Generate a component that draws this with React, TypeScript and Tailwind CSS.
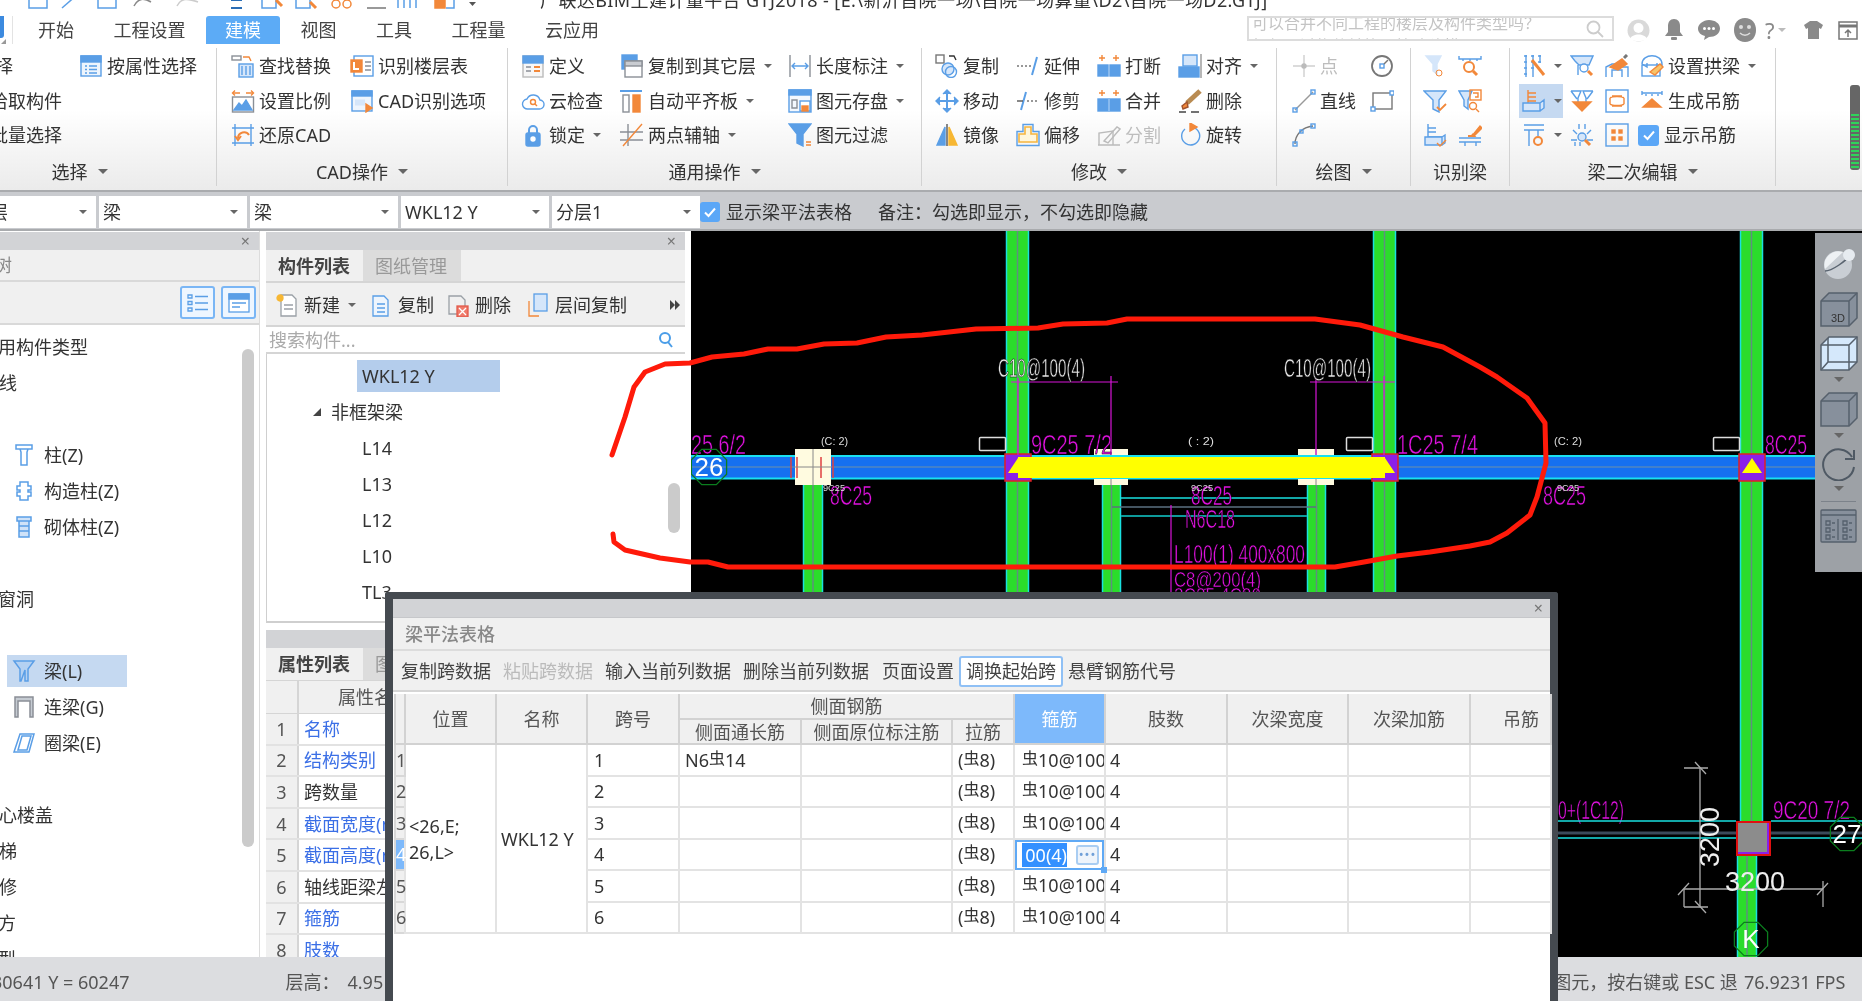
import * as React from "react";

const B = "#5a9ee6";
const O = "#f2883a";
const L = "#d5e6fa";
const D = "#8a8f96";

// ribbon glyphs, all drawn on a 24 box
const ICONS: Record<string, React.ReactNode> = {
  attr: <><rect x="2" y="2" width="20" height="20" fill="#eef5fd" /><rect x="2" y="2" width="20" height="6" fill={B} /><path d="M6 12h2M10 12h8M6 15.5h2M10 15.5h8M6 19h2M10 19h8" /></>,
  find: <><rect x="1" y="2" width="9" height="4" stroke={D} /><path d="M12 3h6l2 4" stroke={O} /><rect x="8" y="10" width="14" height="13" fill={L} /><path d="M11 12v9M15 12v9M19 12v9" /></>,
  scale: <><path d="M2 4h7M15 4h7" stroke={O} /><path d="M4 1.500 1.500 4 4 6.500M20 1.500 22.500 4 20 6.500" stroke={O} /><rect x="1.500" y="8" width="21" height="15" stroke={D} /><path d="M3 21l5-7 3 3 4-6 6 10z" fill={B} /></>,
  undo: <><path d="M1 5h22M1 20h22M4 1v22M20 1v22" /><path d="M7 15a6 6 0 0 1 11-3" stroke={O} strokeWidth="2" /><path d="M10 13 7 17 4 13" stroke={O} strokeWidth="2" /></>,
  floor: <><rect x="4" y="2" width="19" height="20" /><rect x="1" y="6" width="11" height="12" fill={O} stroke={O} /><path d="M4 8v7h5" stroke="#fff" strokeWidth="2" /><path d="M15 8h6M15 12h6M15 16h6" stroke={D} /></>,
  cadopt: <><rect x="2" y="2" width="20" height="20" fill="#eef5fd" /><rect x="2" y="2" width="20" height="5" fill={B} /><path d="M5 15h10M5 12h10" stroke={L} strokeWidth="3" /><path d="M16 15l6 4-6 4z" fill={O} stroke={O} /></>,
  define: <><rect x="2" y="2" width="20" height="21" fill="#f7f7f7" stroke="#bbb" /><rect x="2" y="2" width="20" height="7" fill={B} /><path d="M5 13h5M5 17h5" stroke={D} /><path d="M13 13h6M13 17h6" stroke={O} strokeWidth="2" /></>,
  cloud: <><path d="M7 20a5 5 0 0 1-1-10 7 7 0 0 1 13 1 4.500 4.500 0 0 1-1 9z" /><circle cx="12" cy="13" r="2.500" stroke={O} /><path d="M14 15l2 2" stroke={O} /></>,
  lock: <><path d="M8 11V7a4 4 0 0 1 8 0v4" strokeWidth="2" /><rect x="5" y="10" width="14" height="13" rx="2" fill={B} /><circle cx="12" cy="16" r="2" fill="#fff" stroke="#fff" /></>,
  copyto: <><rect x="2" y="1" width="15" height="14" fill={B} /><rect x="5" y="7" width="17" height="16" fill="#fff" stroke={D} /><rect x="5" y="7" width="17" height="5" fill="#c9ccd1" stroke={D} /></>,
  level: <><path d="M0 2h22" strokeWidth="2" /><rect x="3" y="6" width="6" height="17" stroke={D} /><rect x="13" y="6" width="7" height="17" fill={O} stroke={O} /></>,
  axis: <><path d="M0 9h23M0 17h23" stroke={D} /><path d="M8 1v22" stroke={D} /><path d="M22 1 3 23" stroke={O} /></>,
  dim: <><path d="M2 1v22M22 1v22" stroke={D} /><path d="M4 12h16M7 9l-3 3 3 3M17 9l3 3-3 3" /></>,
  store: <><rect x="1" y="1" width="22" height="22" fill="#f3f8fe" /><rect x="1" y="1" width="22" height="5" fill={B} /><path d="M4 11h5v8H4z" stroke={D} /><rect x="12" y="12" width="10" height="10" stroke={B} fill="#fff" /><rect x="14" y="17" width="6" height="5" fill={O} stroke={O} /></>,
  filter: <><path d="M1 1h22l-8 10v12l-6-3v-9z" fill={B} /><path d="M18 19h5M18 22h5" stroke={O} /></>,
  copy: <><rect x="1" y="1" width="8" height="8" stroke="#777" /><path d="M14 2h5l2 4" stroke="#333" /><circle cx="13" cy="15" r="6" fill={L} /><circle cx="16" cy="18" r="5.500" /></>,
  move: <><path d="M12 3v18M3 12h18" strokeWidth="2" /><path d="M8 5l4-4 4 4M8 19l4 4 4-4M5 8l-4 4 4 4M19 8l4 4-4 4" fill={B} /></>,
  mirror: <><path d="M10 4v18H2z" fill={B} stroke={B} /><path d="M14 4v18h8z" fill="#f7b733" stroke="#f7b733" /><path d="M12 1v22" stroke="#555" /></>,
  extend: <><path d="M1 12h2M5 12h2M9 12h2M13 12h2" stroke="#777" /><path d="M21 3 16 21" strokeWidth="2" /></>,
  trim: <><path d="M10 3 5 21" strokeWidth="2" /><path d="M1 12h6" stroke="#555" /><path d="M11 12h2M15 12h2M19 12h2" stroke="#777" /></>,
  offset: <><path d="M9 4h6v7h6v8H3v-8h6z" fill="#fff6dc" stroke="#f5b53f" strokeWidth="1.600" /><path d="M7 1.500h10v7h6v14H1v-14h6z" /></>,
  brk: <><path d="M5 1v6M2 4h6M19 1v6M16 4h6" stroke={O} /><rect x="1" y="11" width="10" height="11" fill={B} stroke={B} /><rect x="13" y="11" width="10" height="11" fill={B} stroke={B} /></>,
  merge: <><path d="M5 1v6M2 4h6M19 1v6M16 4h6" stroke={O} /><rect x="1" y="10" width="22" height="12" fill={B} stroke={B} /><path d="M12 10v12" stroke="#9cc6f2" /></>,
  split: <><path d="M2 22V10l14-2v14zM1 22h22" stroke="#bbb" /><path d="M7 18 20 4l3 2-12 14z" stroke="#bbb" /></>,
  align: <><rect x="5" y="1" width="14" height="11" fill={L} /><rect x="1" y="13" width="20" height="10" fill={B} stroke={B} /><path d="M23 0v24" stroke="#999" /></>,
  brush: <><path d="M22 2 9 14" stroke="#b98b52" strokeWidth="5" /><path d="M9 13l-5 4 1 3 5-2z" fill={O} stroke="#a0522d" /><path d="M1 23h7M13 23h8" stroke="#444" /></>,
  rotate: <><path d="M13 4a9 9 0 1 1-6 2" /><path d="M12 0l7 4-7 4z" fill={O} stroke={O} /></>,
  point: <><path d="M1 12h22M12 1v22" stroke="#cfcfcf" /><circle cx="12" cy="12" r="2" fill="#bbb" stroke="#bbb" /></>,
  circle: <><circle cx="12" cy="12" r="10" stroke="#777" strokeWidth="1.800" /><rect x="10" y="10" width="4" height="4" /><path d="M14 10l4-4" stroke="#777" /></>,
  line: <><path d="M3 21 21 3" stroke="#999" /><rect x="1" y="19" width="4" height="4" /><rect x="19" y="1" width="4" height="4" /></>,
  rect: <><rect x="3" y="4" width="19" height="16" stroke="#777" /><rect x="1" y="18" width="4" height="4" fill="#fff" /><rect x="20" y="2" width="4" height="4" fill="#fff" /></>,
  arc: <><path d="M3 21C3 12 10 4 21 3" stroke="#777" /><rect x="1" y="19" width="4" height="4" /><rect x="19" y="1" width="4" height="4" /><rect x="8" y="7" width="3" height="3" /></>,
  f1: <><path d="M3 2h15l-4 8v10l-4-3v-7z" fill={L} stroke={L} /><circle cx="16" cy="19" r="3" stroke={O} strokeWidth="1" /></>,
  f2: <><path d="M1 2v3h22V2M5 5v2M12 5v2M19 5v2" /><circle cx="11" cy="13" r="5" stroke={O} strokeWidth="2" /><path d="M15 17l4 4" stroke={O} strokeWidth="3" /></>,
  f3: <><path d="M1 2h22l-7 9v12l-6-3v-9z" fill={L} /><path d="M14 18l3 3 6-6" stroke={O} strokeWidth="1.800" /></>,
  f4: <><path d="M1 2h13l-4 9v9l-4-3v-6z" fill={L} /><rect x="12" y="1" width="11" height="10" stroke={O} /><path d="M15 4h5v4h-3" stroke={O} /><circle cx="15" cy="17" r="3.500" stroke={O} /><path d="M18 20l3 3" stroke={O} /></>,
  f5: <><path d="M5 1v13h14M5 5h8M5 9h8" stroke={B} /><path d="M2 14h17v8H2zM19 14l3-2v8l-3 2" fill={L} /><path d="M14 20l3 3 6-6" stroke={O} /></>,
  f6: <><path d="M14 13 22 3l2 2-8 8z" fill={O} stroke={O} /><path d="M10 13h6l-2-2" stroke={O} strokeWidth="2" /><path d="M1 15h22M1 19h22M7 19v4M18 19v4" /></>,
  g1: <><path d="M2 2h3M9 2h3M16 2h3M2 8h3M9 8h3M2 14h3M9 14h3M2 20h3M16 8h3M4 1v22M18 1v8M11 1v22" /><path d="M10 6l12 15" stroke={O} strokeWidth="3" /></>,
  g2: <><path d="M1 2h22l-4 9h-10l-4-4z" fill={L} /><path d="M8 11v10" /><circle cx="14" cy="14" r="4" fill="#fff" /><path d="M18 17l4 4" stroke={O} strokeWidth="3" /></>,
  g3: <><path d="M1 23V13l6-3 5 0 6 3 5 0v10" /><path d="M7 23V16h10v7" /><path d="M5 13 17 5l5 5-9 6z" fill={O} stroke={O} /><path d="M19 4l3-3" stroke="#777" strokeWidth="3" /></>,
  g4: <><path d="M2 10c0-11 20-11 20 0v2" /><path d="M2 10l5 3V9M22 10l-5 3V9" /><rect x="2" y="11" width="18" height="11" /><path d="M10 18l10-8 3 3-8 8z" fill="#f7c46a" stroke={O} /></>,
  g5: <><path d="M6 1v14M6 4h8M6 8h8M6 12h8" stroke={O} /><path d="M1 14h17v8H1zM18 14l4-3v8l-4 3" fill={L} /></>,
  g6: <><path d="M1 2h10l-3 7v4M23 2H13l3 7v4M1 2l6 8M23 2l-6 8" /><path d="M3 13h18l-9 9z" fill={O} stroke={O} /></>,
  g7: <><rect x="1" y="1" width="22" height="22" /><path d="M7 7h10M7 17h10M5 9v6M19 9v6M5 9c2-2 12-2 14 0M5 15c2 2 12 2 14 0" stroke={O} /></>,
  g8: <><path d="M2 2v4M22 2v4M2 4h20M6 5v2M12 5v2M18 5v2" /><path d="M12 10l9 8H3z" fill={O} stroke={O} /></>,
  g9: <><path d="M2 2h20M2 7h20M7 7v16M16 7v6" /><circle cx="16" cy="18" r="4" stroke={O} strokeWidth="2" /></>,
  g10: <><path d="M9 1v5M15 1v5M3 7l4 4M21 7l-4 4M1 17h6M17 17h6" /><circle cx="12" cy="14" r="4" fill={L} /><path d="M15 17l5 5" stroke={O} strokeWidth="3" /><path d="M5 23v-4M10 23v-4" /></>,
  g11: <><rect x="1" y="1" width="22" height="22" /><rect x="7" y="7" width="3" height="3" fill={O} stroke={O} /><rect x="14" y="7" width="3" height="3" fill={O} stroke={O} /><rect x="7" y="14" width="3" height="3" fill={O} stroke={O} /><rect x="14" y="14" width="3" height="3" fill={O} stroke={O} /></>,
};

const Ic = ({ name, size = 24 }: { name: string; size?: number }) => (
  <svg width={size} height={size} viewBox="0 0 24 24" fill="none" stroke={B} strokeWidth="1.400" className="shrink-0">
    {ICONS[name]}
  </svg>
);

const Caret = ({ big, className = "" }: { big?: boolean; className?: string }) => (
  <span
    className={
      (big
        ? "border-x-[5px] border-t-[5px] "
        : "border-x-[4px] border-t-[4px] ") +
      "inline-block w-0 h-0 border-x-transparent border-t-[#666] " +
      className
    }
  />
);

interface ItemProps {
  icon?: string;
  label?: string;
  caret?: boolean;
  gray?: boolean;
  className?: string;
}

const Item = ({ icon, label, caret, gray, className = "" }: ItemProps) => (
  <div className={"flex items-center h-[34.5px] whitespace-nowrap " + (gray ? "text-[#bdbdbd] " : "") + className}>
    {icon && <Ic name={icon} />}
    {label && <span className={icon ? "ml-[4px]" : ""}>{label}</span>}
    {caret && <Caret className="ml-[8px]" />}
  </div>
);

const Check = ({ className = "" }: { className?: string }) => (
  <span className={"flex items-center justify-center w-[20px] h-[20px] rounded-[3px] bg-[#5ba7f7] shrink-0 " + className}>
    <svg width="14" height="14" viewBox="0 0 14 14" fill="none" stroke="#fff" strokeWidth="2">
      <path d="M2 7.500 5.500 11 12 3.500" />
    </svg>
  </span>
);

const Group = ({ w, label, labelClass = "", children }: { w: string; label: string; labelClass?: string; children: React.ReactNode }) => (
  <div className={"flex flex-col my-[4px] border-r border-[#d2d2d2] shrink-0 " + w}>
    <div className="flex pt-[1px]">{children}</div>
    <div className={"flex-1 flex items-center justify-center gap-[10px] pt-[5px] " + labelClass}>
      <span>{label}</span>
      {label !== "识别梁" && <Caret big />}
    </div>
  </div>
);

const Ribbon = () => (
  <div className="flex h-[146px] bg-linear-to-b from-white from-45% to-[#ebebeb] text-[18px] text-[#333] leading-none">
    <Group w="w-[217px]" label="选择" labelClass="pr-[57px]">
      <div className="w-[79px]">
        <Item label="选择" className="ml-[-23px]" />
        <Item label="拾取构件" className="ml-[-10px]" />
        <Item label="批量选择" className="ml-[-10px]" />
      </div>
      <Item icon="attr" label="按属性选择" />
    </Group>
    <Group w="w-[291px]" label="CAD操作">
      <div className="w-[119px] ml-[14px]">
        <Item icon="find" label="查找替换" />
        <Item icon="scale" label="设置比例" />
        <Item icon="undo" label="还原CAD" />
      </div>
      <div>
        <Item icon="floor" label="识别楼层表" />
        <Item icon="cadopt" label="CAD识别选项" />
      </div>
    </Group>
    <Group w="w-[414px]" label="通用操作">
      <div className="w-[99px] ml-[13px]">
        <Item icon="define" label="定义" />
        <Item icon="cloud" label="云检查" />
        <Item icon="lock" label="锁定" caret />
      </div>
      <div className="w-[168px]">
        <Item icon="copyto" label="复制到其它层" caret />
        <Item icon="level" label="自动平齐板" caret />
        <Item icon="axis" label="两点辅轴" caret />
      </div>
      <div>
        <Item icon="dim" label="长度标注" caret />
        <Item icon="store" label="图元存盘" caret />
        <Item icon="filter" label="图元过滤" />
      </div>
    </Group>
    <Group w="w-[355px]" label="修改">
      <div className="w-[81px] ml-[13px]">
        <Item icon="copy" label="复制" />
        <Item icon="move" label="移动" />
        <Item icon="mirror" label="镜像" />
      </div>
      <div className="w-[81px]">
        <Item icon="extend" label="延伸" />
        <Item icon="trim" label="修剪" />
        <Item icon="offset" label="偏移" />
      </div>
      <div className="w-[81px]">
        <Item icon="brk" label="打断" />
        <Item icon="merge" label="合并" />
        <Item icon="split" label="分割" gray />
      </div>
      <div>
        <Item icon="align" label="对齐" caret />
        <Item icon="brush" label="删除" />
        <Item icon="rotate" label="旋转" />
      </div>
    </Group>
    <Group w="w-[134px]" label="绘图">
      <div className="w-[78px] ml-[15px]">
        <Item icon="point" label="点" gray />
        <Item icon="line" label="直线" />
        <Item icon="arc" />
      </div>
      <div>
        <Item icon="circle" />
        <Item icon="rect" />
      </div>
    </Group>
    <Group w="w-[99px]" label="识别梁">
      <div className="w-[35px] ml-[12px]">
        <Item icon="f1" />
        <Item icon="f3" />
        <Item icon="f5" />
      </div>
      <div>
        <Item icon="f2" />
        <Item icon="f4" />
        <Item icon="f6" />
      </div>
    </Group>
    <Group w="w-[266px]" label="梁二次编辑">
      <div className="w-[51px] ml-[9px]">
        <Item icon="g1" caret className="pl-[3px]" />
        <Item icon="g5" caret className="pl-[3px] w-[44px] bg-[#c5d9f1]" />
        <Item icon="g9" caret className="pl-[3px]" />
      </div>
      <div className="w-[35px]">
        <Item icon="g2" />
        <Item icon="g6" />
        <Item icon="g10" />
      </div>
      <div className="w-[33px]">
        <Item icon="g3" />
        <Item icon="g7" />
        <Item icon="g11" />
      </div>
      <div>
        <Item icon="g4" label="设置拱梁" caret className="pl-[2px]" />
        <Item icon="g8" label="生成吊筋" className="pl-[2px]" />
        <div className="flex items-center h-[34.5px] whitespace-nowrap">
          <Check className="w-[21px] h-[21px]" />
          <span className="ml-[5px]">显示吊筋</span>
        </div>
      </div>
    </Group>
    {/* little memory gauge at the far right */}
    <div className="ml-[74px] mt-[41px] w-[10px] h-[85px] rounded-[3px] bg-[#666] flex flex-col justify-end gap-[2px] pb-[2px] px-[1px]">
      {[...Array(14)].map((_, i) => (
        <div key={i} className="h-[2px] bg-[#2fd35a]" />
      ))}
    </div>
  </div>
);

const QuickBar = () => (
  <svg width="480" height="16" viewBox="0 0 480 16" fill="none" stroke={B} strokeWidth="1.500" className="shrink-0">
    <rect x="29" y="-8" width="18" height="16" />
    <path d="M62 8 78-6" />
    <rect x="98" y="-8" width="18" height="16" />
    <path d="M134 6c4-8 10-8 17-4" stroke="#888" />
    <path d="M177 6c4-8 10-8 21-4" stroke="#ccc" />
    <path d="M231 8h11M231 0h11" stroke="#2a6db5" strokeWidth="2" />
    <rect x="262" y="-6" width="14" height="14" />
    <path d="M276 0l6 6" stroke={O} strokeWidth="3" />
    <rect x="296" y="-6" width="14" height="14" />
    <path d="M310 2l6 6" stroke={O} strokeWidth="3" />
    <circle cx="336" cy="4" r="4" stroke={O} />
    <circle cx="347" cy="4" r="4" stroke={O} />
    <path d="M367 8h19" stroke="#777" />
    <path d="M398 8V-4h18v12M404 8V-4M410 8V-4" />
    <rect x="435" y="-4" width="10" height="12" fill={O} stroke={O} />
    <path d="M446-4h8v12h-8" />
    <path d="M469 2h7l-3.500 4z" fill="#555" stroke="none" />
  </svg>
);

const TabBar = () => (
  <div className="flex h-[28px] text-[18px] text-[#444] leading-none">
    <div className="w-[13px] border-r border-[#e3e3e3] shrink-0">
      <div className="w-[4px] h-[22px] bg-[#3c8adf] rounded-br-[3px]" />
      <div className="mt-[1px] ml-[1px] w-0 h-0 border-l-[5px] border-l-transparent border-b-[5px] border-b-[#999]" />
    </div>
    <div className="flex ml-[6px] gap-[1.500px] shrink-0 whitespace-nowrap">
      {["开始", "工程设置", "建模", "视图", "工具", "工程量", "云应用"].map((t) => (
        <div
          key={t}
          className={
            t === "建模"
              ? "flex items-center px-[19px] rounded-t-[3px] bg-[#5cabf6] text-white"
              : "flex items-center px-[19px]"
          }
        >
          {t}
        </div>
      ))}
    </div>
    <div className="ml-[629px] w-[367px] h-[25px] border-2 border-[#dcdcdc] overflow-hidden relative text-[16px] text-[#c4c4c4] shrink-0">
      <div className="pl-[3px] mt-[-3px] whitespace-nowrap h-[23px]">可以合并不同工程的楼层及构件类型吗？</div>
      <div className="pl-[3px] whitespace-nowrap">如何通过构件转换，快速建模？</div>
      <svg width="18" height="18" viewBox="0 0 18 18" fill="none" stroke="#ccc" strokeWidth="1.800" className="absolute right-[8px] top-[2px]">
        <circle cx="7.500" cy="7.500" r="6" />
        <path d="M12 12l5 5" />
      </svg>
    </div>
    <div className="flex items-center gap-[14px] ml-[13px] text-[#8a8a8a] shrink-0">
      <svg width="23" height="23" viewBox="0 0 23 23" className="shrink-0">
        <circle cx="11.500" cy="11.500" r="11" fill="#d9d9d9" />
        <circle cx="11.500" cy="9" r="5" fill="#fff" />
        <path d="M3 20c2-6 15-6 17 0-4 3-13 3-17 0z" fill="#fff" />
      </svg>
      <svg width="20" height="22" viewBox="0 0 20 22" fill="#8a8a8a" className="shrink-0">
        <path d="M10 0c4 0 6 3 6 7v6l3 4H1l3-4V7c0-4 2-7 6-7z" />
        <rect x="7" y="18" width="6" height="3" rx="1" />
      </svg>
      <svg width="22" height="20" viewBox="0 0 22 20" className="shrink-0">
        <path d="M11 0c6 0 11 3.500 11 8.500S17 17 11 17l-5 3 1-4C3 15 0 12.500 0 8.500S5 0 11 0z" fill="#8a8a8a" />
        <circle cx="6.500" cy="8.500" r="1.500" fill="#fff" />
        <circle cx="11" cy="8.500" r="1.500" fill="#fff" />
        <circle cx="15.500" cy="8.500" r="1.500" fill="#fff" />
      </svg>
      <svg width="22" height="24" viewBox="0 0 22 24" className="shrink-0">
        <path d="M11 0c7 0 11 5 11 12s-4 12-11 12S0 19 0 12 4 0 11 0z" fill="#8a8a8a" />
        <circle cx="7" cy="9" r="2" fill="#ddd" />
        <circle cx="15" cy="9" r="2" fill="#ddd" />
        <path d="M6 15c3 3 7 3 10 0" stroke="#ddd" strokeWidth="1.500" fill="none" />
      </svg>
      <div className="flex items-center gap-[3px] text-[22px] ml-[-5px]">
        ?<Caret className="border-t-[#bbb]" />
      </div>
      <svg width="19" height="18" viewBox="0 0 19 18" fill="#8a8a8a" className="ml-[4px] shrink-0">
        <path d="M6 0h7l6 4-2 4-2-1v11H4V7L2 8 0 4z" />
      </svg>
      <svg width="20" height="19" viewBox="0 0 20 19" fill="none" stroke="#777" strokeWidth="1.500" className="ml-[1px] shrink-0">
        <rect x="1" y="1" width="18" height="17" />
        <path d="M1 5h18" strokeWidth="3" />
        <path d="M10 16V9M7 12l3-3 3 3" />
      </svg>
    </div>
  </div>
);

const Select = ({ text, w = "w-[148px]", textClass = "" }: { text: string; w?: string; textClass?: string }) => (
  <div className={"flex items-center justify-between h-[32px] bg-white pl-[4px] pr-[9px] shrink-0 overflow-hidden " + w}>
    <span className={"whitespace-nowrap " + textClass}>{text}</span>
    <Caret />
  </div>
);

const FilterBar = () => (
  <div className="flex items-start h-[37px] pt-[4px] gap-[3px] bg-[#c9cbcf] text-[18px] text-[#333] leading-none">
    <Select text="层" w="w-[96px]" textClass="ml-[-14px]" />
    <Select text="梁" />
    <Select text="梁" />
    <Select text="WKL12 Y" />
    <Select text="分层1" />
    <Check className="ml-[-3px] mt-[6px]" />
    <span className="ml-[3px] mt-[7px]">显示梁平法表格</span>
    <span className="ml-[23px] mt-[7px]">备注：勾选即显示，不勾选即隐藏</span>
  </div>
);

const LEFT_ROWS: { text: string; cut?: string; icon?: React.ReactNode; selected?: boolean }[] = [
  { text: "常用构件类型", cut: "ml-[-20px]" },
  { text: "轴线", cut: "ml-[-19px]" },
  { text: "" },
  {
    text: "柱(Z)",
    icon: <path d="M4 2h16v4H4zM8 6l1 3v13h6V9l1-3" />,
  },
  {
    text: "构造柱(Z)",
    icon: <path d="M8 3h8v4h3v4h-3v2h3v4h-3v4H8v-4H5v-4h3v-2H5V7h3z" />,
  },
  {
    text: "砌体柱(Z)",
    icon: <path d="M5 2h14v4H5zM7 6h10v16H7zM7 11h10M7 16h10" fill="#cfe2f8" />,
  },
  { text: "" },
  { text: "门窗洞", cut: "ml-[-20px]" },
  { text: "" },
  {
    text: "梁(L)",
    selected: true,
    icon: <path d="M2 2h20l-6 8v12h-3V11L9 22H8V10z" fill="#b4d1f2" />,
  },
  {
    text: "连梁(G)",
    icon: <path d="M3 2h18v20h-3V6H6v16H3z" stroke="#8a8f96" fill="#c5cbd2" />,
  },
  {
    text: "圈梁(E)",
    icon: <path d="M8 3h14l-5 18H2zM10 5h9l-4 14H6z" />,
  },
  { text: "" },
  { text: "空心楼盖", cut: "ml-[-19px]" },
  { text: "楼梯", cut: "ml-[-19px]" },
  { text: "装修", cut: "ml-[-19px]" },
  { text: "土方", cut: "ml-[-20px]" },
  { text: "类型", cut: "ml-[-20px]" },
];

const PanelHead = ({ x = "" }: { x?: string }) => (
  <div className="flex items-center justify-end h-[18px] bg-[#d2d3d6] shrink-0">
    {x && <span className={"text-[16px] leading-none text-[#777] " + x}>×</span>}
  </div>
);

const LeftPanel = () => (
  <div className="w-[260px] h-full pt-[1px] shrink-0 flex flex-col border-r border-[#dcdcdc] overflow-hidden relative">
    <PanelHead x="mr-[9px]" />
    <div className="flex items-center h-[32px] bg-[#f0f0f0] border-b-2 border-[#d9d9d9] text-[18px] text-[#888] shrink-0">
      <span className="ml-[-42px] whitespace-nowrap">导航树</span>
    </div>
    <div className="flex justify-end items-center gap-[6px] h-[43px] pr-[3px] bg-[#f0f0f0] border-b-2 border-[#d9d9d9] shrink-0">
      <div className="flex items-center justify-center w-[35px] h-[33px] rounded-[3px] bg-[#eef6ff] border-2 border-[#7ab6f5]">
        <svg width="22" height="20" viewBox="0 0 22 20" fill="none" stroke={B} strokeWidth="1.300">
          <path d="M1 2h4v3H1zM1 8.500h4v3H1zM1 15h4v3H1zM8 3.500h13M8 10h13M8 16.500h13" />
        </svg>
      </div>
      <div className="flex items-center justify-center w-[35px] h-[33px] rounded-[3px] bg-[#eef6ff] border-2 border-[#7ab6f5]">
        <svg width="22" height="20" viewBox="0 0 22 20" fill="none" stroke={B} strokeWidth="1.300">
          <rect x="1" y="1" width="20" height="18" fill="#fff" />
          <path d="M1 1h20v5H1z" fill={B} />
          <path d="M4 10h14M4 14h8" />
        </svg>
      </div>
    </div>
    <div className="flex-1 bg-white pt-[4px] text-[18px] text-[#333] leading-none overflow-hidden">
      {LEFT_ROWS.map((r, i) => (
        <div key={i} className="flex items-center h-[36px] whitespace-nowrap">
          {r.icon ? (
            <div className={"flex items-center w-[120px] h-[32px] ml-[7px] pl-[5px] " + (r.selected ? "bg-[#c5d9f1]" : "")}>
              <svg width="24" height="24" viewBox="0 0 24 24" fill="none" stroke={B} strokeWidth="1.500" className="shrink-0">
                {r.icon}
              </svg>
              <span className="ml-[8px]">{r.text}</span>
            </div>
          ) : (
            <span className={r.cut}>{r.text}</span>
          )}
        </div>
      ))}
    </div>
    <div className="absolute left-[242px] top-[118px] w-[12px] h-[498px] rounded-full bg-[#cbcbcb]" />
  </div>
);

const TREE = ["L14", "L13", "L12", "L10", "TL3"];

const PROPS: [string, boolean][] = [
  ["名称", true],
  ["结构类别", true],
  ["跨数量", false],
  ["截面宽度(mm)", true],
  ["截面高度(mm)", true],
  ["轴线距梁左线距离", false],
  ["箍筋", true],
  ["肢数", true],
];

const ToolBtn = ({ icon, text, caret, className = "" }: { icon: React.ReactNode; text: string; caret?: boolean; className?: string }) => (
  <div className={"flex items-center shrink-0 whitespace-nowrap " + className}>
    <svg width="22" height="24" viewBox="0 0 22 24" fill="none" strokeWidth="1.300" stroke="#9aa0a6" className="shrink-0">
      {icon}
    </svg>
    <span className="ml-[6px]">{text}</span>
    {caret && <Caret className="ml-[8px]" />}
  </div>
);

const MiddlePanel = () => (
  <div className="w-[419px] ml-[6px] pt-[1px] h-full shrink-0 flex flex-col text-[18px] text-[#333] leading-none overflow-hidden">
    <PanelHead x="mr-[9px]" />
    <div className="flex h-[33px] bg-[#f0f0f0] border-b-2 border-[#d5d5d5] shrink-0">
      <div className="flex items-center w-[97px] pl-[12px] font-bold text-[#444]">构件列表</div>
      <div className="flex items-center w-[98px] pl-[12px] bg-[#dcdcdc] text-[#999]">图纸管理</div>
    </div>
    <div className="flex items-center h-[44px] pl-[10px] pt-[2px] bg-[#f0f0f0] border-b-2 border-[#d5d5d5] shrink-0">
      <ToolBtn
        text="新建"
        caret
        icon={<><path d="M5 2h11l4 4v17H5z" fill="#fff" /><circle cx="4" cy="5" r="3" fill="#f7b733" stroke="#f7b733" /><path d="M8 12h9M8 16h9" /></>}
      />
      <ToolBtn
        text="复制"
        className="ml-[14px]"
        icon={<><path d="M3 3h11l4 4v16H3z" fill="#eef5fd" stroke={B} /><path d="M7 11h8M7 15h8M7 19h8" stroke={B} /></>}
      />
      <ToolBtn
        text="删除"
        className="ml-[13px]"
        icon={<><path d="M2 3h12l4 4v14H2z" /><rect x="10" y="13" width="11" height="11" fill="#f07a6a" stroke="#e05a4a" /><path d="M12 15l7 7M19 15l-7 7" stroke="#fff" /></>}
      />
      <ToolBtn
        text="层间复制"
        className="ml-[16px]"
        icon={<><path d="M2 8v15h10" stroke={O} /><rect x="7" y="1" width="13" height="17" fill={L} stroke={B} /></>}
      />
      <span className="ml-[43px] w-0 h-0 border-y-[5px] border-y-transparent border-l-[5px] border-l-[#444]" />
      <span className="w-0 h-0 border-y-[5px] border-y-transparent border-l-[5px] border-l-[#444]" />
    </div>
    <div className="flex items-center justify-between h-[27px] pl-[3px] pr-[11px] bg-white border-b-2 border-[#d5d5d5] text-[#aaa] shrink-0">
      <span>搜索构件...</span>
      <svg width="16" height="18" viewBox="0 0 16 18" fill="none" stroke="#4a9de8" strokeWidth="2">
        <circle cx="7" cy="7" r="5" />
        <path d="M10 11l4 5" />
      </svg>
    </div>
    <div className="h-[269px] shrink-0 bg-white border-l border-b-2 border-[#cfcfcf] pt-[4px] relative">
      <div className="flex items-center h-[36px]">
        <div className="flex items-center ml-[90px] pl-[5px] w-[143px] h-[32px] bg-[#b4cdec]">WKL12 Y</div>
      </div>
      <div className="flex items-center h-[36px] pl-[46px]">
        <span className="w-0 h-0 border-l-[8px] border-l-transparent border-b-[8px] border-b-[#444]" />
        <span className="ml-[10px]">非框架梁</span>
      </div>
      {TREE.map((t) => (
        <div key={t} className="flex items-center h-[36px] pl-[95px]">
          {t}
        </div>
      ))}
      <div className="absolute right-[5px] top-[129px] w-[12px] h-[50px] rounded-full bg-[#cbcbcb]" />
    </div>
    <div className="h-[7px] bg-white shrink-0" />
    <PanelHead />
    <div className="flex h-[33px] bg-[#f0f0f0] border-b border-[#d5d5d5] shrink-0">
      <div className="flex items-center w-[97px] pl-[12px] font-bold text-[#444]">属性列表</div>
      <div className="flex items-center w-[98px] pl-[12px] bg-[#dcdcdc] text-[#999]">图层管理</div>
    </div>
    <div className="flex h-[33px] bg-[#f0f0f0] border-b border-[#d5d5d5] shrink-0">
      <div className="w-[33px] border-r-2 border-[#d5d5d5]" />
      <div className="flex items-center pl-[39px] text-[#555]">属性名称</div>
    </div>
    {PROPS.map(([name, blue], i) => (
      <div key={name} className="flex h-[31.600px] bg-white border-b-2 border-[#e2e2e2] shrink-0 whitespace-nowrap">
        <div className="flex items-center justify-center w-[33px] bg-[#f0f0f0] border-r-2 border-[#d5d5d5] text-[#555]">{i + 1}</div>
        <div className={"flex items-center pl-[5px] " + (blue ? "text-[#3b6fe6]" : "text-[#333]")}>{name}</div>
      </div>
    ))}
  </div>
);

const Cad = ({ x, y, w, h, children, fill = "#e012e0" }: { x: number; y: number; w: number; h: number; children: string; fill?: string }) => (
  <text
    x={x}
    y={y}
    fontSize={h * 1.5}
    textLength={w}
    lengthAdjust="spacingAndGlyphs"
    fill={fill}
    stroke={h > 10 ? "#000" : "none"}
    strokeWidth="0.500"
    fontFamily="Liberation Sans, sans-serif"
  >
    {children}
  </text>
);

const VCol = ({ x, w, y1, y2 }: { x: number; w: number; y1: number; y2: number }) => (
  <>
    <rect x={x} y={y1} width={w} height={y2 - y1} fill="#2bdc2b" />
    <path d={`M${x + 0.5} ${y1}V${y2}M${x + w - 0.5} ${y1}V${y2}`} stroke="#19e0e0" strokeWidth="1.500" />
    <path d={`M${x + w / 2} ${y1}V${y2}`} stroke="#5f8f7f" strokeWidth="1.500" />
  </>
);

const Hex = ({ cx, cy, r, label }: { cx: number; cy: number; r: number; label: string }) => {
  const pts = [...Array(8)]
    .map((_, i) => {
      const a = (Math.PI / 4) * i + Math.PI / 8;
      return `${(cx + r * Math.cos(a)).toFixed(1)},${(cy + r * Math.sin(a)).toFixed(1)}`;
    })
    .join(" ");
  return (
    <>
      <polygon points={pts} fill="none" stroke="#0b7d1e" strokeWidth="1.300" />
      <text x={cx} y={cy + 9} textAnchor="middle" fontSize="26" fill="#fff" fontFamily="Liberation Sans, sans-serif">
        {label}
      </text>
    </>
  );
};

const Junction = ({ x }: { x: number }) => (
  <>
    <rect x={x} y={454} width={26} height={27} fill="#8a20e8" stroke="#e02020" strokeWidth="1.500" />
    <path d={`M${x + 13} 458l10 15h-20z`} fill="#ffff00" />
  </>
);

const CadDrawing = () => (
  <svg width="1171" height="726" viewBox="691 231 1171 726" className="block">
    <rect x="691" y="231" width="1171" height="726" fill="#000" />
    <VCol x={1006} w={23} y1={231} y2={600} />
    <VCol x={1373} w={23} y1={231} y2={600} />
    <VCol x={1740} w={23} y1={231} y2={821} />
    <VCol x={1737} w={20} y1={856} y2={957} />
    <VCol x={803} w={20} y1={480} y2={600} />
    <VCol x={1102} w={19} y1={480} y2={600} />
    <VCol x={1307} w={19} y1={480} y2={600} />

    {/* main beam */}
    <rect x="691" y="455" width="1124" height="24" fill="#1570f0" />
    <path d="M691 456H1815M691 478.500H1815" stroke="#19e0f0" strokeWidth="2" />
    <path d="M691 467H1815" stroke="#6f8fa8" strokeWidth="1.200" />
    <Junction x={1005} />
    <Junction x={1372} />
    <Junction x={1739} />
    <rect x="1018" y="457" width="367" height="21" fill="#ffff00" />

    {/* column caps */}
    <rect x="795" y="449" width="36" height="36" fill="#fffbe0" />
    <path d="M791 457v21M797 457v21M821 457v21M833 457v21" stroke="#e04040" strokeWidth="1.500" />
    <path d="M795 467h36M813 449v36" stroke="#888" />
    <rect x="1094" y="449" width="34" height="6" fill="#fffbe0" />
    <rect x="1094" y="479" width="34" height="6" fill="#fffbe0" />
    <rect x="1298" y="449" width="36" height="6" fill="#fffbe0" />
    <rect x="1298" y="479" width="36" height="6" fill="#fffbe0" />
    <path d="M1111 479v6M1316 479v6M1111 449v6M1316 449v6" stroke="#888" />

    {/* openings */}
    <rect x="979.500" y="437.500" width="26" height="13" rx="1" fill="none" stroke="#ddd" strokeWidth="1.500" />
    <rect x="1346.500" y="437.500" width="26" height="13" rx="1" fill="none" stroke="#ddd" strokeWidth="1.500" />
    <rect x="1713.500" y="437.500" width="26" height="13" rx="1" fill="none" stroke="#ddd" strokeWidth="1.500" />

    {/* secondary bars between the short columns */}
    <path d="M1121 498H1307" stroke="#19e0e0" strokeWidth="1.500" />
    <path d="M1112 507H1316" stroke="#5b7080" strokeWidth="1.500" />
    <path d="M1121 516H1307" stroke="#0d9a9a" strokeWidth="2" />

    {/* dimension leaders */}
    <g stroke="#d814d8" strokeWidth="1.200" fill="none">
      <path d="M1011 382H1118M1018 378V455M1111 376V455" />
      <path d="M1310 382H1395M1316 378V455M1384 376V455" />
      <path d="M1171 505V600" />
    </g>

    <Cad x={691} y={454} w={55} h={18}>25 6/2</Cad>
    <Cad x={1031} y={454} w={81} h={18}>9C25 7/2</Cad>
    <Cad x={1397} y={454} w={81} h={18}>1C25 7/4</Cad>
    <Cad x={1765} y={454} w={42} h={18}>8C25</Cad>
    <Cad x={830} y={505} w={42} h={18}>8C25</Cad>
    <Cad x={1191} y={505} w={41} h={18}>8C25</Cad>
    <Cad x={1543} y={505} w={43} h={18}>8C25</Cad>
    <Cad x={1185} y={528} w={50} h={17}>N6C18</Cad>
    <Cad x={1174} y={563} w={131} h={17}>L100(1) 400x800</Cad>
    <Cad x={1174} y={587} w={87} h={15}>C8@200(4)</Cad>
    <Cad x={1174} y={603} w={87} h={15}>3C25 4C20</Cad>
    <Cad x={1558} y={819} w={66} h={17}>0+(1C12)</Cad>
    <Cad x={1773} y={819} w={77} h={17}>9C20 7/2</Cad>
    <Cad x={998} y={377} w={87} h={17} fill="#e8e8e8">C10@100(4)</Cad>
    <Cad x={1284} y={377} w={87} h={17} fill="#e8e8e8">C10@100(4)</Cad>

    <Cad x={821} y={445} w={27} h={7} fill="#ddd">(C: 2)</Cad>
    <Cad x={1188} y={445} w={26} h={7} fill="#ddd">( : 2)</Cad>
    <Cad x={1554} y={445} w={28} h={7} fill="#ddd">(C: 2)</Cad>
    <Cad x={823} y={491} w={22} h={6} fill="#ddd">9C25</Cad>
    <Cad x={1191} y={491} w={22} h={6} fill="#ddd">9C25</Cad>
    <Cad x={1557} y={491} w={22} h={6} fill="#ddd">9C25</Cad>

    <Hex cx={709} cy={467} r={19} label="26" />

    {/* corner detail, bottom right */}
    <path d="M1558 821H1736M1558 838H1736M1771 821H1862M1771 838H1862" stroke="#19e0e0" strokeWidth="1.500" />
    <path d="M1558 833H1736M1771 833H1862" stroke="#3b4a5a" strokeWidth="3" />
    <rect x="1737" y="822" width="33" height="33" fill="#8a20e8" stroke="#e01010" strokeWidth="2" />
    <rect x="1738" y="823" width="29" height="29" fill="#8c8c8c" />
    <g stroke="#aaa" strokeWidth="1.300" fill="none">
      <path d="M1700 768V907M1684 768H1708M1684 907H1708M1684 889H1823M1684 889V907M1823 881V907" />
      <path d="M1695 762l11 12M1695 901l11 12M1678 895l11-12M1817 895l11-12" />
    </g>
    <text x="1725" y="891" fontSize="27" fill="#eee" fontFamily="Liberation Sans, sans-serif">3200</text>
    <text x="0" y="0" fontSize="27" fill="#eee" fontFamily="Liberation Sans, sans-serif" transform="translate(1719 867) rotate(-90)">3200</text>
    <Hex cx={1847} cy={834} r={18} label="27" />
    <Hex cx={1751} cy={939} r={18} label="K" />
  </svg>
);

const ViewTool = () => (
  <div className="absolute right-0 top-[2px] w-[47px] h-[339px] bg-[#9da1a6] flex flex-col items-center pt-[14px]">
    <svg width="34" height="34" viewBox="0 0 34 34" className="shrink-0">
      <circle cx="16" cy="18" r="14" fill="#c9ced4" />
      <path d="M3 24C10 24 24 14 28 8" stroke="#5a6470" strokeWidth="1.500" fill="none" />
      <path d="M3 22a14 14 0 0 1 18-17" fill="#eef1f4" />
      <circle cx="27" cy="8" r="6" fill="#e6ebf0" />
    </svg>
    <svg width="38" height="36" viewBox="0 0 38 36" className="mt-[10px] shrink-0" fill="#87909c" stroke="#56606c" strokeWidth="1.500">
      <path d="M1 10 9 2h28v25l-8 8H1z" />
      <path d="M1 10h28v25M29 10l8-8" fill="none" />
      <text x="11" y="31" fontSize="11" fill="#333" stroke="none" fontFamily="Liberation Sans, sans-serif">3D</text>
    </svg>
    <svg width="38" height="36" viewBox="0 0 38 36" className="mt-[8px] shrink-0" fill="#d5e8fb" stroke="#56606c" strokeWidth="1.500">
      <path d="M1 10 9 2h28v25l-8 8H1z" />
      <path d="M1 10h28v25M29 10l8-8M8 3v24h29M1 35l7-8" fill="none" />
    </svg>
    <Caret big className="mt-[6px] border-t-[#4a535e]" />
    <svg width="38" height="36" viewBox="0 0 38 36" className="mt-[9px] shrink-0" fill="#87909c" stroke="#56606c" strokeWidth="1.500">
      <path d="M1 10 9 2h28v25l-8 8H1z" />
      <path d="M1 10h28v25M29 10l8-8" fill="none" />
    </svg>
    <Caret big className="mt-[6px] border-t-[#4a535e]" />
    <svg width="36" height="34" viewBox="0 0 36 34" fill="none" stroke="#4f5964" strokeWidth="2" className="mt-[9px] shrink-0">
      <path d="M31 10A15.500 15.500 0 1 0 33 20" />
      <path d="M33 3v9h-9" />
    </svg>
    <Caret big className="mt-[5px] border-t-[#4a535e]" />
    <div className="w-[35px] h-[1px] bg-[#7c828a] mt-[10px]" />
    <svg width="37" height="34" viewBox="0 0 37 34" className="mt-[7px] shrink-0" fill="#87909c" stroke="#56606c" strokeWidth="1.300">
      <rect x="1" y="1" width="35" height="32" rx="1" />
      <path d="M1 6h35M18 10v21M6 12h4v4H6zM6 19h4v4H6zM6 26h4v4H6zM23 12h4v4h-4zM23 19h4v4h-4zM23 26h4v4h-4zM12 14h3M12 21h3M12 28h3M29 14h3M29 21h3M29 28h3" fill="none" />
    </svg>
  </div>
);

const HEAD_COLS = ["w-[10px]", "w-[91px]", "w-[91px]", "w-[92px]", "w-[122px]", "w-[151px]", "w-[62px]", "w-[91px]", "w-[122px]", "w-[121px]", "w-[122px]", "w-[81px]"];

const HEAD_CELL = "border-x-2 border-b-2 border-[#d2d2d2] bg-[#f0f0f0] font-normal text-[#555] p-0";
const BODY_CELL = "border-x-2 border-b-2 border-[#e3e3e3] p-0 overflow-hidden whitespace-nowrap";

const SPANS = [1, 2, 3, 4, 5, 6];

const Bar = () => <span className="text-[16px] relative top-[-3px]">虫</span>;

const BeamTable = () => (
  <div className="absolute left-[385px] top-[592px] w-[1173px] h-[409px] border-t-[7px] border-x-[8px] border-[#454a50] rounded-t-[3px] bg-white flex flex-col text-[18px] text-[#333] leading-none">
    <div className="flex items-center justify-end h-[19px] bg-[#d2d3d6] border-b border-[#c6c7ca] shrink-0">
      <span className="text-[16px] leading-none text-[#777] mr-[7px]">×</span>
    </div>
    <div className="flex items-center h-[33px] pl-[12px] bg-[#f0f0f0] border-b-2 border-[#dcdcdc] text-[#888] font-medium shrink-0">梁平法表格</div>
    <div className="flex items-center h-[41px] pl-[8px] pt-[1px] gap-[12px] bg-[#f0f0f0] border-b-2 border-[#d5d5d5] text-[#444] whitespace-nowrap shrink-0">
      <span>复制跨数据</span>
      <span className="text-[#bbb]">粘贴跨数据</span>
      <span>输入当前列数据</span>
      <span>删除当前列数据</span>
      <span className="ml-[1px]">页面设置</span>
      <span className="flex items-center h-[31px] px-[5px] -mx-[7px] bg-white border-2 border-[#8fc0f5] rounded-[3px]">调换起始跨</span>
      <span>悬臂钢筋代号</span>
    </div>
    <table className="table-fixed border-collapse w-[1156px] ml-[1px] mt-[2px]">
      <colgroup>
        {HEAD_COLS.map((c, i) => (
          <col key={i} className={c} />
        ))}
      </colgroup>
      <thead>
        <tr className="h-[25px]">
          <th rowSpan={2} className={HEAD_CELL} />
          <th rowSpan={2} className={HEAD_CELL}>位置</th>
          <th rowSpan={2} className={HEAD_CELL}>名称</th>
          <th rowSpan={2} className={HEAD_CELL}>跨号</th>
          <th colSpan={3} className={HEAD_CELL}>侧面钢筋</th>
          <th rowSpan={2} className="border-x-2 border-b-2 border-[#d2d2d2] bg-[#7db9fb] font-normal text-white p-0">箍筋</th>
          <th rowSpan={2} className={HEAD_CELL}>肢数</th>
          <th rowSpan={2} className={HEAD_CELL}>次梁宽度</th>
          <th rowSpan={2} className={HEAD_CELL}>次梁加筋</th>
          <th rowSpan={2} className={HEAD_CELL + " overflow-hidden"}>
            <div className="whitespace-nowrap pl-[32px] text-left">吊筋</div>
          </th>
        </tr>
        <tr className="h-[25px]">
          <th className={HEAD_CELL}>侧面通长筋</th>
          <th className={HEAD_CELL}>侧面原位标注筋</th>
          <th className={HEAD_CELL}>拉筋</th>
        </tr>
      </thead>
      <tbody>
        {SPANS.map((n) => (
          <tr key={n} className="h-[31.500px]">
            <td className={"border-x-2 border-b-2 border-[#d8d8d8] p-0 text-center " + (n === 4 ? "bg-[#7db9fb] text-white" : "bg-[#f0f0f0] text-[#555]")}>{n}</td>
            {n === 1 && (
              <>
                <td rowSpan={6} className={BODY_CELL + " pl-[3px] leading-[26px]"}>
                  &lt;26,E;
                  <br />
                  26,L&gt;
                </td>
                <td rowSpan={6} className={BODY_CELL + " pl-[4px]"}>WKL12 Y</td>
              </>
            )}
            <td className={BODY_CELL + " pl-[6px]"}>{n}</td>
            <td className={BODY_CELL + " pl-[5px]"}>
              {n === 1 && (
                <>
                  N6<Bar />14
                </>
              )}
            </td>
            <td className={BODY_CELL} />
            <td className={BODY_CELL + " pl-[5px]"}>
              (<Bar />8)
            </td>
            {n === 4 ? (
              <td className="p-0 relative">
                <div className="absolute inset-0 border-2 border-[#5fa9f5] flex items-center pl-[5px] bg-white">
                  <span className="bg-[#3390ff] text-white h-[24px] flex items-center w-[45px] overflow-hidden justify-end">00(4)</span>
                  <span className="ml-[9px] flex items-center justify-center w-[23px] h-[20px] rounded-[3px] border-2 border-[#a9cdf2] bg-[#eef4fb] text-[#6f9fd8] text-[13px] leading-none tracking-[1px]">•••</span>
                </div>
                <div className="absolute right-[-3px] bottom-[-3px] w-[6px] h-[6px] bg-[#5fa9f5]" />
              </td>
            ) : (
              <td className={BODY_CELL + " pl-[7px]"}>
                <Bar />10@100(4)
              </td>
            )}
            <td className={BODY_CELL + " pl-[4px]"}>4</td>
            <td className={BODY_CELL} />
            <td className={BODY_CELL} />
            <td className={BODY_CELL} />
          </tr>
        ))}
      </tbody>
    </table>
  </div>
);

const RED_PATH =
  "M612 455L625 417L634 387L645 372L665 364L690 363L712 357L744 354L768 349L797 349L824 344L857 343L886 337L922 335L976 329L1038 328L1063 324L1107 323L1127 319L1315 319L1360 325L1403 337L1443 347L1480 367L1497 377L1527 398L1545 423L1546 463L1537 497L1530 515L1507 533L1490 542L1470 546L1430 552L1397 556L1364 562L1335 567L728 567L708 562L690 562L660 558L625 550L614 542L613 534";

export default function App() {
  return (
    <div className="relative w-[1862px] h-[1001px] overflow-hidden bg-white font-['Noto_Sans','Noto_Sans_CJK_SC',sans-serif] blur-[0.4px]">
      <div className="flex h-[16px] overflow-hidden bg-white text-[18px] leading-none text-[#333]">
        <QuickBar />
        <span className="ml-[60px] mt-[-9px] whitespace-nowrap tracking-[0.4px]">广联达BIM土建计量平台 GTJ2018 - [E:\新沂首院一场\首院一场算量\D2\首院一场D2.GTJ]</span>
      </div>
      <TabBar />
      <Ribbon />
      <div className="h-[2px] bg-[#a9abae]" />
      <FilterBar />
      <div className="h-[2px] bg-[#a9abae]" />
      <div className="flex h-[726px] bg-white overflow-hidden">
        <LeftPanel />
        <MiddlePanel />
        <div className="relative ml-[6px] w-[1171px] shrink-0">
          <CadDrawing />
          <ViewTool />
        </div>
      </div>
      <div className="flex items-center h-[44px] pt-[5px] bg-[#dcdde0] text-[18px] leading-none text-[#555] whitespace-nowrap">
        <span className="ml-[-8px]">30641 Y = 60247</span>
        <span className="ml-[156px]">层高：</span>
        <span className="ml-[8px]">4.95</span>
        <span className="ml-[1170px]">图元，按右键或 ESC 退</span>
        <span className="absolute left-[1744px]">76.9231 FPS</span>
      </div>

      {/* hand drawn mark over the screen capture */}
      <svg width="1862" height="1001" viewBox="0 0 1862 1001" fill="none" className="absolute left-0 top-0 pointer-events-none">
        <path d={RED_PATH} stroke="#ff1a0a" strokeWidth="5" strokeLinejoin="round" strokeLinecap="round" />
      </svg>

      <BeamTable />
    </div>
  );
}
